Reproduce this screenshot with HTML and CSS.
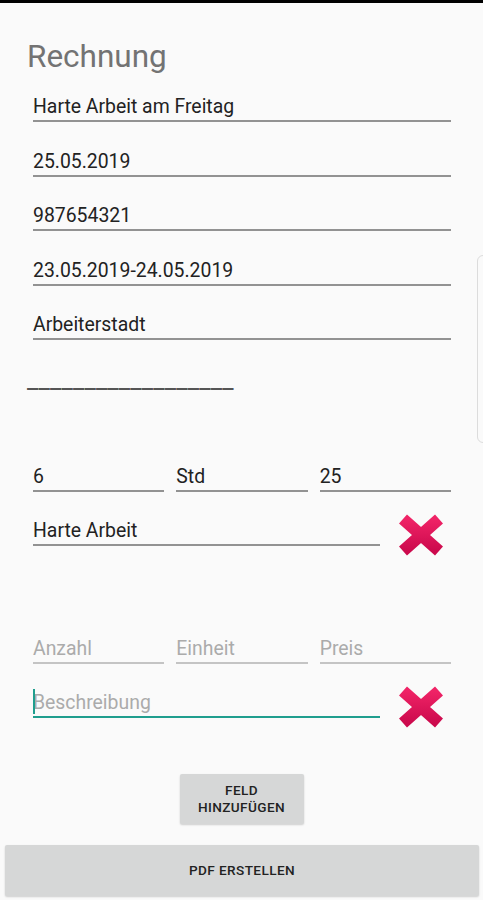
FILE: index.html
```html
<!DOCTYPE html>
<html lang="de">
  <head>
    <meta charset="UTF-8" />
    <meta name="viewport" content="width=device-width, initial-scale=1.0" />
    <title>Rechnung</title>
    <link rel="stylesheet" href="styles.css">
  </head>
  <body>
    <div class="statusbar"></div>
    <div class="scrollhint"></div>

    <h1 class="title">Rechnung</h1>

    <div class="fields">
      <div class="field">Harte Arbeit am Freitag</div>
      <div class="field">25.05.2019</div>
      <div class="field">987654321</div>
      <div class="field">23.05.2019-24.05.2019</div>
      <div class="field">Arbeiterstadt</div>
    </div>

    <div class="sign">__________________</div>

    <div class="item">
      <div class="cols">
        <div class="field">6</div>
        <div class="field">Std</div>
        <div class="field">25</div>
      </div>
      <div class="desc">
        <div class="field">Harte Arbeit</div>
        <svg class="remove" viewBox="0 0 46 42" width="46" height="42">
          <defs>
            <linearGradient id="xg" x1="0" y1="0" x2="0" y2="1">
              <stop offset="0" stop-color="#ef2366" />
              <stop offset="1" stop-color="#cc0a4d" />
            </linearGradient>
          </defs>
          <path d="M5 5 L41 37 M41 5 L5 37" stroke="url(#xg)" stroke-width="12" fill="none" />
        </svg>
      </div>
    </div>

    <div class="item item-new">
      <div class="cols">
        <div class="field empty">Anzahl</div>
        <div class="field empty">Einheit</div>
        <div class="field empty">Preis</div>
      </div>
      <div class="desc">
        <div class="field empty focus"><span class="cursor"></span>Beschreibung</div>
        <svg class="remove" viewBox="0 0 46 42" width="46" height="42">
          <path d="M5 5 L41 37 M41 5 L5 37" stroke="url(#xg)" stroke-width="12" fill="none" />
        </svg>
      </div>
    </div>

    <div class="actions">
      <button class="btn btn-small">FELD<br>HINZUFÜGEN</button>
    </div>
    <button class="btn btn-wide">PDF ERSTELLEN</button>
  </body>
</html>
```

FILE: styles.css
```css
body {
  margin: 0;
  padding: 0;
  background: #fafafa;
  font-family: Roboto, "Noto Sans", sans-serif;
  color: #222;
  width: 483px;
  height: 900px;
  overflow: hidden;
  position: relative;
}
.statusbar {
  height: 3px;
  background: #000;
}
.scrollhint {
  position: absolute;
  left: 477px;
  top: 255px;
  width: 20px;
  height: 186px;
  border: 1px solid #dcdcdc;
  border-radius: 6px;
}
.title {
  margin: 0;
  padding: 37px 0 0 27px;
  font-size: 31.5px;
  font-weight: normal;
  line-height: 34px;
  color: #737373;
}
.fields {
  margin: 22px 32px 0 33px;
  display: flex;
  flex-direction: column;
  gap: 28.5px;
}
.field {
  font-size: 19.4px;
  line-height: 22px;
  padding-bottom: 2px;
  border-bottom: 2px solid #929292;
  white-space: nowrap;
  position: relative;
}
.sign {
  margin: 29px 0 0 27px;
  font-size: 25px;
  line-height: 22px;
  color: #555;
  letter-spacing: 0.2px;
}
.item {
  margin: 74.5px 32px 0 33px;
}
.cols {
  display: grid;
  grid-template-columns: 1fr 1fr 1fr;
  gap: 12px;
}
.desc {
  display: flex;
  align-items: flex-start;
  margin-top: 22px;
}
.desc .field {
  flex: 1;
  margin-top: 6px;
}
.remove {
  margin: 0 7px 0 18px;
  flex: none;
}
.item-new {
  margin-top: 82.5px;
}
.empty {
  color: #ababab;
  border-bottom-color: #c4c4c4;
}
.focus {
  border-bottom-color: #1f9e8e;
}
.cursor {
  position: absolute;
  left: 0;
  top: -3px;
  width: 2px;
  height: 25px;
  background: #1f9e8e;
}
.actions {
  margin-top: 45.5px;
  display: flex;
  justify-content: center;
}
.btn {
  font-family: Roboto, "Noto Sans", sans-serif;
  font-weight: 500;
  font-size: 13.6px;
  line-height: 17px;
  letter-spacing: 0.4px;
  color: #222;
  background: #d6d7d7;
  border: none;
  border-radius: 2px;
  box-shadow: 0 1px 2px rgba(0, 0, 0, 0.18);
}
.btn-small {
  width: 124px;
  height: 50px;
  padding: 0;
}
.btn-wide {
  display: block;
  width: 474px;
  height: 51px;
  margin: 21px 0 0 5px;
}
```
